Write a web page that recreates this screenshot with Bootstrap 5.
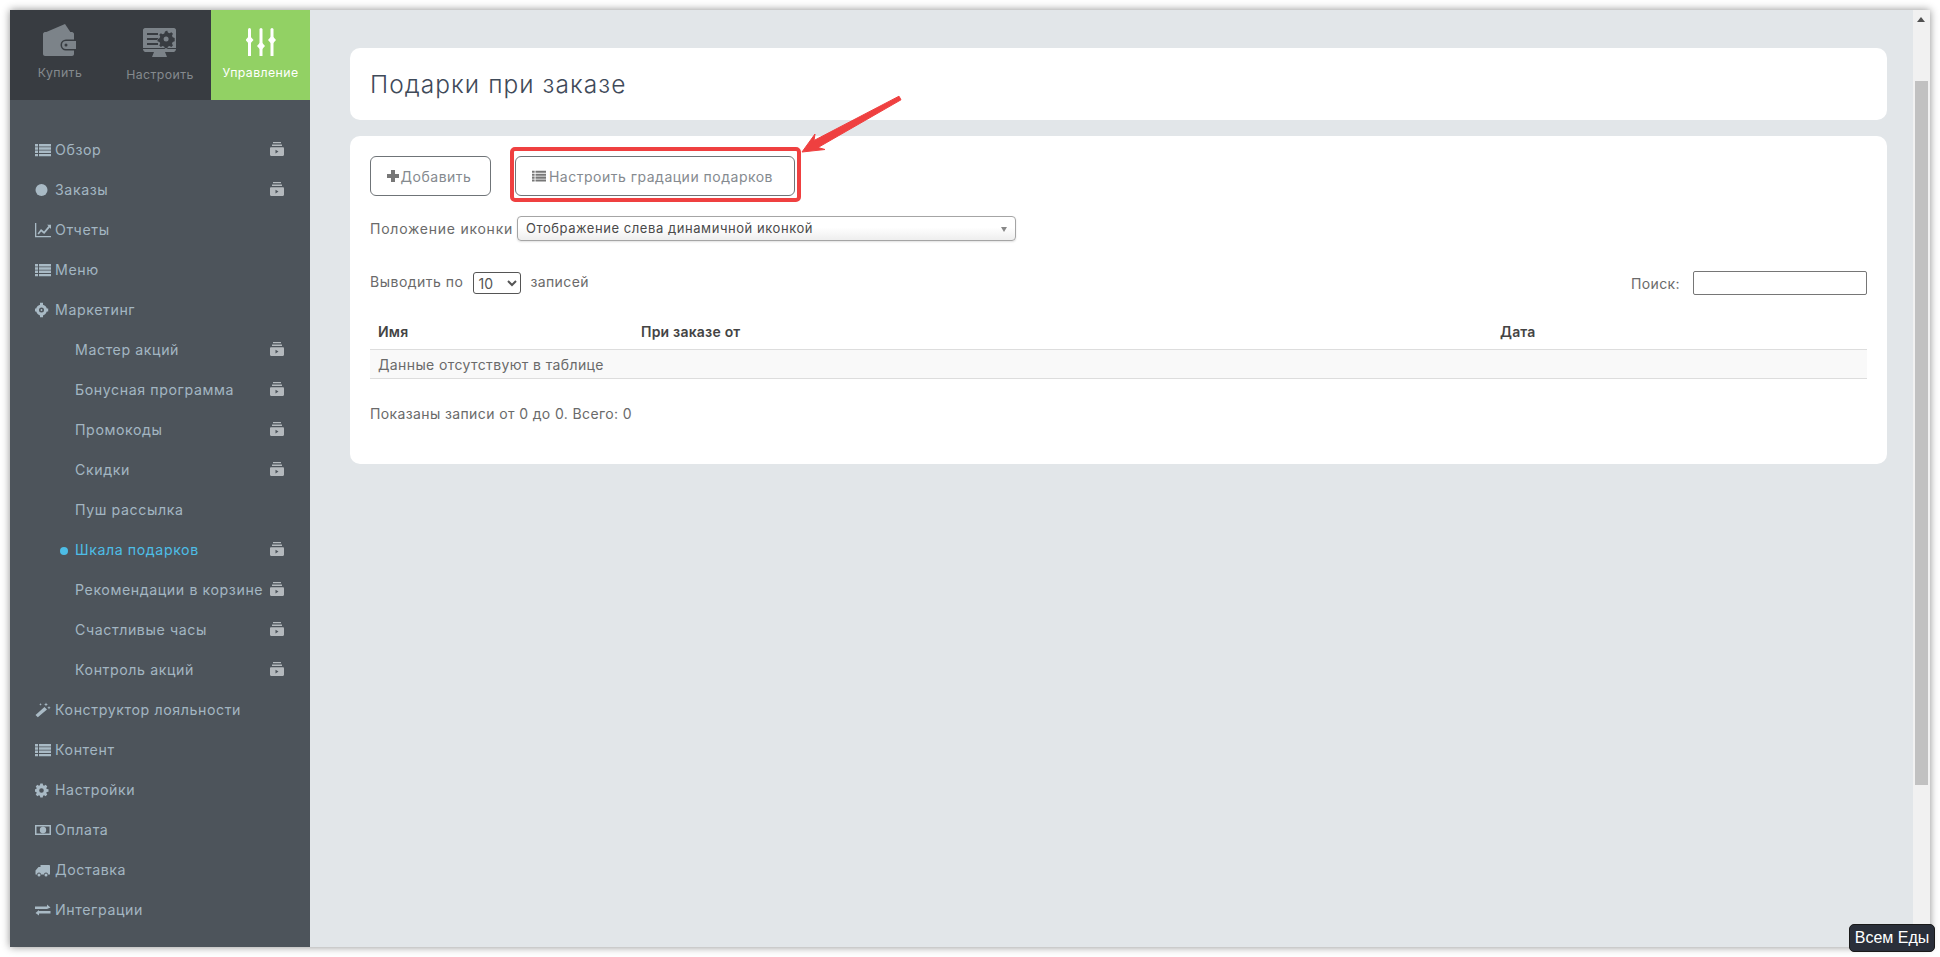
<!DOCTYPE html>
<html lang="ru"><head><meta charset="utf-8"><title>Подарки при заказе</title>
<link href="https://cdn.jsdelivr.net/npm/bootstrap@5.3.0/dist/css/bootstrap.min.css" rel="stylesheet">
<style>
html,body{height:100%;overflow:hidden;background:#fff}
body{font-family:"Inter","Noto Sans",sans-serif;font-size:14px;color:#6a6a6a}
.shot-win{position:relative;height:937px;width:1920px;margin:10px;box-shadow:0 0 8px rgba(0,0,0,.45)}
.shot-side{width:300px;background:#4d545b;flex:none}
.shot-top{height:90px;background:#383c41}
.shot-tab{width:100px;padding-top:14px;font-size:12.3px;letter-spacing:.4px;color:#858a8e}
.shot-tab.on{width:99px;background:#92d164;color:#fff;margin-left:1px}
.shot-tab svg{display:block;margin-bottom:8px}
.shot-menu{padding-top:30px}
.shot-item{height:40px;padding:0 26px 0 25px;color:#a3b6c2;font-size:14.2px;letter-spacing:.58px;white-space:nowrap}
.shot-item.sub{padding-left:65px}
.shot-item.act{color:#4dbde6;position:relative}
.shot-dot{position:absolute;left:50px;top:17px;width:8px;height:8px;border-radius:50%;background:#4dbde6}
.shot-ic{width:16px;height:16px;flex:none;margin-right:4px;fill:#a9bac5}
.shot-vid{width:14px;height:14px;flex:none;margin-left:auto;fill:#b4b9bd;margin-top:-3px}
.shot-main{background:#e2e6e9;padding:38px 26px 0 40px}
.shot-card{background:#fff;border-radius:10px;border:0}
.shot-head{height:72px;padding:2px 20px 0;margin-bottom:16px}
.shot-h{font-size:24.5px;font-weight:300;color:#3f4a59;margin:0;letter-spacing:1.05px}
.shot-body{height:328px;padding:20px;font-size:14px;letter-spacing:.38px;color:#6a6a6a}
.shot-btn{height:40px;border:1px solid #6f7478;border-radius:6px;background:#fff;color:#858a8f;font-size:14px;padding:0;letter-spacing:.5px}
.shot-b1{width:121px;padding-right:4px}.shot-b2{width:280px;margin-left:24px;padding-right:5px}
.shot-btn svg{width:14px;height:14px;fill:#777;margin-right:3px}
.shot-b1 svg{margin-right:1px}
.shot-l1{height:25px;margin-top:20px}
.shot-lbl{letter-spacing:.76px}
.shot-fake{width:499px;height:25px;margin-left:4px;border:1px solid #a5a5a5;border-radius:4px;font-size:13px;letter-spacing:.56px;color:#4a4a4a;padding:1px 8px 0;background:linear-gradient(#fff 45%,#eee);box-shadow:0 1px 2px rgba(0,0,0,.12)}
.shot-arr{margin-left:auto;width:0;height:0;border:3.500px solid transparent;border-top:5px solid #888;border-bottom:0}
.shot-l2{height:24px;margin-top:30px}
.shot-raise{margin-bottom:3px}
.shot-wide{letter-spacing:.5px}
.shot-sel{width:48px;height:22px;margin:0 9px 0 10px;font-size:14px;padding:0;color:#555;border:1px solid #555;border-radius:3px;background:#fff}
.shot-inp{width:174px;height:24px;margin-left:13px;border:1px solid #767676;border-radius:2px}
.shot-tbl{margin:19px 0 0;table-layout:fixed;width:100%;--bs-table-bg:transparent}
.shot-tbl th{height:35px;padding:0 8px;border-bottom:1px solid #ddd;font-weight:600;color:#444;font-size:14px;letter-spacing:.2px;vertical-align:middle}
.shot-tbl td{height:29px;padding:1px 8px 0;background:#f9f9f9;border-bottom:1px solid #ddd;color:#6a6a6a;vertical-align:middle}
.shot-c1{width:263px}.shot-c2{width:859px}
.shot-foot{margin-top:24px}
.shot-scroll{width:17px;flex:none;background:#f1f1f1;position:relative}
.shot-thumb{position:absolute;top:71px;left:2px;width:13px;height:704px;background:#c1c1c1}
.shot-up{position:absolute;top:7px;left:4px;border:4px solid transparent;border-bottom:5px solid #505050;border-top:0}
.shot-tag{position:absolute;right:-5px;bottom:-5px;width:86px;height:28px;background:#2a2f3a;color:#fff;font-family:"Liberation Sans",sans-serif;font-size:16px;line-height:26px;text-align:center;border-radius:5px;border:1px solid #1a1a1a}
.shot-mark{position:absolute;left:0;top:0;pointer-events:none}
</style></head><body>
<svg width="0" height="0" class="position-absolute"><defs>
<symbol id="i-list" viewBox="0 0 16 16"><path d="M0 2h3v2.400H0zM4 2h12v2.400H4zM0 5.300h3v2.400H0zM4 5.300h12v2.400H4zM0 8.600h3V11H0zM4 8.600h12V11H4zM0 11.900h3v2.400H0zM4 11.900h12v2.400H4z"/></symbol>
<symbol id="i-vid" viewBox="0 0 14 14"><path d="M3 0h8v1.300H3zM2 2.600h10v1.300H2z"/><path fill-rule="evenodd" d="M1.200 5.200h11.600c.7 0 1.200.5 1.200 1.200v6.400c0 .7-.5 1.200-1.200 1.200H1.200C.5 14 0 13.500 0 12.800V6.400c0-.7.5-1.200 1.200-1.200zM5.500 7.800v3.600l3-1.800z"/></symbol>
</defs></svg>
<div class="shot-win d-flex">
 <div class="shot-side d-flex flex-column">
  <div class="shot-top d-flex">
   <div class="shot-tab d-flex flex-column align-items-center">
    <svg width="34" height="32" viewBox="0 0 34 32" fill="#7c8389"><path d="M1 9 22 0l6 9z"/><path fill-rule="evenodd" d="M2 8h27c1 0 2 1 2 2v5.500H23a5.500 5.500 0 0 0 0 11h8V30c0 1-1 2-2 2H2c-1 0-2-1-2-2V10c0-1 1-2 2-2z"/><path fill-rule="evenodd" d="M23 17h10v8H23a4 4 0 0 1 0-8zm0 2.500a1.500 1.500 0 1 0 0 3 1.500 1.500 0 0 0 0-3z"/></svg>
    <span>Купить</span></div>
   <div class="shot-tab d-flex flex-column align-items-center">
    <svg width="40" height="34" viewBox="-3 -4 40 34" fill="#7c8389"><path fill-rule="evenodd" d="M2 0h29c1 0 2 1 2 2v18H0V2C0 1 1 0 2 0zM4 5v2h11V5zM4 10v2h11v-2zM4 15v2h11v-2zM22 3.500l-.7 2-1.600.7-1.900-.9-1.500 1.500.9 1.900-.7 1.600-2 .7v2.200l2 .7.7 1.600-.9 1.900 1.500 1.500 1.900-.9 1.600.7.700 2h2.200l.7-2 1.600-.7 1.900.9 1.500-1.500-.9-1.900.7-1.600 2-.7V10l-2-.7-.7-1.600.9-1.900-1.500-1.500-1.900.9-1.600-.7-.7-2zm1.100 5a2.500 2.500 0 1 1 0 5 2.500 2.500 0 0 1 0-5z"/><path d="M0 21h33c0 1.500-1 3-2.500 3H2.500C1 24 0 22.500 0 21zM11 24h11l2 5H9z"/></svg>
    <span>Настроить</span></div>
   <div class="shot-tab on d-flex flex-column align-items-center">
    <svg width="30" height="32" viewBox="0 -4 30 32" fill="#fff"><rect x="2" y="0" width="3" height="29" rx="1.500"/><rect x="13.500" y="0" width="3" height="29" rx="1.500"/><rect x="24.500" y="0" width="3" height="29" rx="1.500"/><path d="M3.500 7.500 7.500 12 3.500 16.500-.5 12zM15 13.500l4 4.500-4 4.500-4-4.500zM26 7.500l4 4.500-4 4.500-4-4.500z"/></svg>
    <span>Управление</span></div>
  </div>
  <nav class="shot-menu nav flex-column">
   <a class="nav-link shot-item d-flex align-items-center"><svg class="shot-ic"><use href="#i-list"/></svg>Обзор<svg class="shot-vid"><use href="#i-vid"/></svg></a>
   <a class="nav-link shot-item d-flex align-items-center"><svg class="shot-ic" viewBox="0 0 16 16"><circle cx="6.500" cy="8" r="6"/></svg>Заказы<svg class="shot-vid"><use href="#i-vid"/></svg></a>
   <a class="nav-link shot-item d-flex align-items-center"><svg class="shot-ic" viewBox="0 0 16 16"><path d="M0 1h1.300v13H16v1.300H0z"/><path d="M2.500 11.500 6 7l3 2.500L13.500 4 12 2.800h4v4.200l-1.300-1.500L9.200 12 6.200 9.500l-2.500 3z"/></svg>Отчеты</a>
   <a class="nav-link shot-item d-flex align-items-center"><svg class="shot-ic"><use href="#i-list"/></svg>Меню</a>
   <a class="nav-link shot-item d-flex align-items-center"><svg class="shot-ic" viewBox="0 0 16 16"><path fill-rule="evenodd" d="M6.500 2.500a5.500 5.500 0 1 1 0 11 5.500 5.500 0 0 1 0-11zm0 3a2.500 2.500 0 1 0 0 5 2.500 2.500 0 0 0 0-5z"/><path d="M5 .8h3v3.200H5zM5 12h3v3.200H5zM-.2 6.500H3v3H-.2zM10 6.500h3.200v3H10z"/><circle cx="6.500" cy="8" r=".9"/></svg>Маркетинг</a>
   <a class="nav-link shot-item sub d-flex align-items-center">Мастер акций<svg class="shot-vid"><use href="#i-vid"/></svg></a>
   <a class="nav-link shot-item sub d-flex align-items-center">Бонусная программа<svg class="shot-vid"><use href="#i-vid"/></svg></a>
   <a class="nav-link shot-item sub d-flex align-items-center">Промокоды<svg class="shot-vid"><use href="#i-vid"/></svg></a>
   <a class="nav-link shot-item sub d-flex align-items-center">Скидки<svg class="shot-vid"><use href="#i-vid"/></svg></a>
   <a class="nav-link shot-item sub d-flex align-items-center">Пуш рассылка</a>
   <a class="nav-link shot-item sub act d-flex align-items-center"><i class="shot-dot"></i>Шкала подарков<svg class="shot-vid"><use href="#i-vid"/></svg></a>
   <a class="nav-link shot-item sub d-flex align-items-center">Рекомендации в корзине<svg class="shot-vid"><use href="#i-vid"/></svg></a>
   <a class="nav-link shot-item sub d-flex align-items-center">Счастливые часы<svg class="shot-vid"><use href="#i-vid"/></svg></a>
   <a class="nav-link shot-item sub d-flex align-items-center">Контроль акций<svg class="shot-vid"><use href="#i-vid"/></svg></a>
   <a class="nav-link shot-item d-flex align-items-center"><svg class="shot-ic" viewBox="0 0 16 16"><path d="M9.500 5 12 7.500 2.800 15.200.5 13zM11 .5l.6 1.400 1.400.6-1.400.6L11 4.500l-.6-1.400L9 2.500l1.400-.6zM14 4l.5 1.200 1.200.5-1.200.5-.5 1.300-.5-1.300-1.200-.5 1.200-.5zM5.500 1l.4 1 1 .4-1 .4-.4 1-.4-1-1-.4 1-.4z"/></svg>Конструктор лояльности</a>
   <a class="nav-link shot-item d-flex align-items-center"><svg class="shot-ic"><use href="#i-list"/></svg>Контент</a>
   <a class="nav-link shot-item d-flex align-items-center"><svg class="shot-ic" viewBox="0 0 16 16"><path fill-rule="evenodd" d="M5.300 1.500h2.400l.4 1.800 1 .4 1.500-1 1.700 1.700-1 1.500.4 1 1.800.4v2.400l-1.800.4-.4 1 1 1.500-1.700 1.700-1.500-1-1 .4-.4 1.800H5.300l-.4-1.800-1-.4-1.500 1L.7 12.600l1-1.500-.4-1L-.5 9.700V7.300l1.800-.4.400-1-1-1.500 1.700-1.700 1.500 1 1-.4zM6.500 6.200a2.300 2.300 0 1 0 0 4.600 2.300 2.300 0 0 0 0-4.600z"/></svg>Настройки</a>
   <a class="nav-link shot-item d-flex align-items-center"><svg class="shot-ic" viewBox="0 0 16 16"><path fill-rule="evenodd" d="M0 3h16v10H0zM1.500 4.500v7h13v-7zM8 4.800a3.200 3.200 0 1 1 0 6.400 3.200 3.200 0 0 1 0-6.400z"/></svg>Оплата</a>
   <a class="nav-link shot-item d-flex align-items-center"><svg class="shot-ic" viewBox="0 0 16 16"><path d="M5.500 3H14c.6 0 1 .4 1 1v8.500h-2a2 2 0 0 0-4 0H6a2 2 0 0 0-4 0H.5V8.500L3.500 5h2z"/><circle cx="4" cy="13" r="1.500"/><circle cx="11" cy="13" r="1.500"/></svg>Доставка</a>
   <a class="nav-link shot-item d-flex align-items-center"><svg class="shot-ic" viewBox="0 0 16 16"><path d="M0 4.500h12V2.500l3.500 3-3.500 1.500H0zM15.500 9H4V8l-3.500 3L4 13.500v-2h11.500z"/></svg>Интеграции</a>
  </nav>
 </div>
 <div class="shot-main flex-grow-1">
  <div class="card shot-card shot-head d-flex flex-row align-items-center"><h1 class="shot-h">Подарки при заказе</h1></div>
  <div class="card shot-card shot-body d-block">
   <div class="d-flex">
    <button class="btn shot-btn shot-b1 d-flex align-items-center justify-content-center"><svg viewBox="0 0 14 14"><path d="M5 1h4v4h4v4H9v4H5V9H1V5h4z"/></svg>Добавить</button>
    <button class="btn shot-btn shot-b2 d-flex align-items-center justify-content-center"><svg><use href="#i-list"/></svg>Настроить градации подарков</button>
   </div>
   <div class="shot-l1 d-flex align-items-center"><span class="shot-lbl">Положение иконки</span><div class="shot-fake d-flex align-items-center">Отображение слева динамичной иконкой<i class="shot-arr"></i></div></div>
   <div class="shot-l2 d-flex align-items-center"><span class="shot-raise shot-wide">Выводить по</span><select class="shot-sel"><option>10</option></select><span class="shot-raise">записей</span>
    <span class="ms-auto">Поиск:</span><input class="shot-inp" type="text"></div>
   <table class="table shot-tbl mb-0">
    <thead><tr><th class="shot-c1">Имя</th><th class="shot-c2">При заказе от</th><th>Дата</th></tr></thead>
    <tbody><tr><td colspan="3">Данные отсутствуют в таблице</td></tr></tbody>
   </table>
   <div class="shot-foot">Показаны записи от 0 до 0. Всего: 0</div>
  </div>
 </div>
 <div class="shot-scroll"><i class="shot-up"></i><div class="shot-thumb"></div></div>
 <div class="shot-tag">Всем Еды</div>
 <svg class="shot-mark" width="1000" height="220" viewBox="0 0 1000 220">
  <rect x="502" y="139" width="287" height="51" rx="3" fill="none" stroke="#ef4040" stroke-width="4"/>
  <path d="M792 142 805 124 804 130.500 889 86.200 891 89.800 808 137.500 815 139.500z" fill="#ef4040" stroke="#ef4040" stroke-width="1" stroke-linejoin="round"/>
 </svg>
</div>
</body></html>
